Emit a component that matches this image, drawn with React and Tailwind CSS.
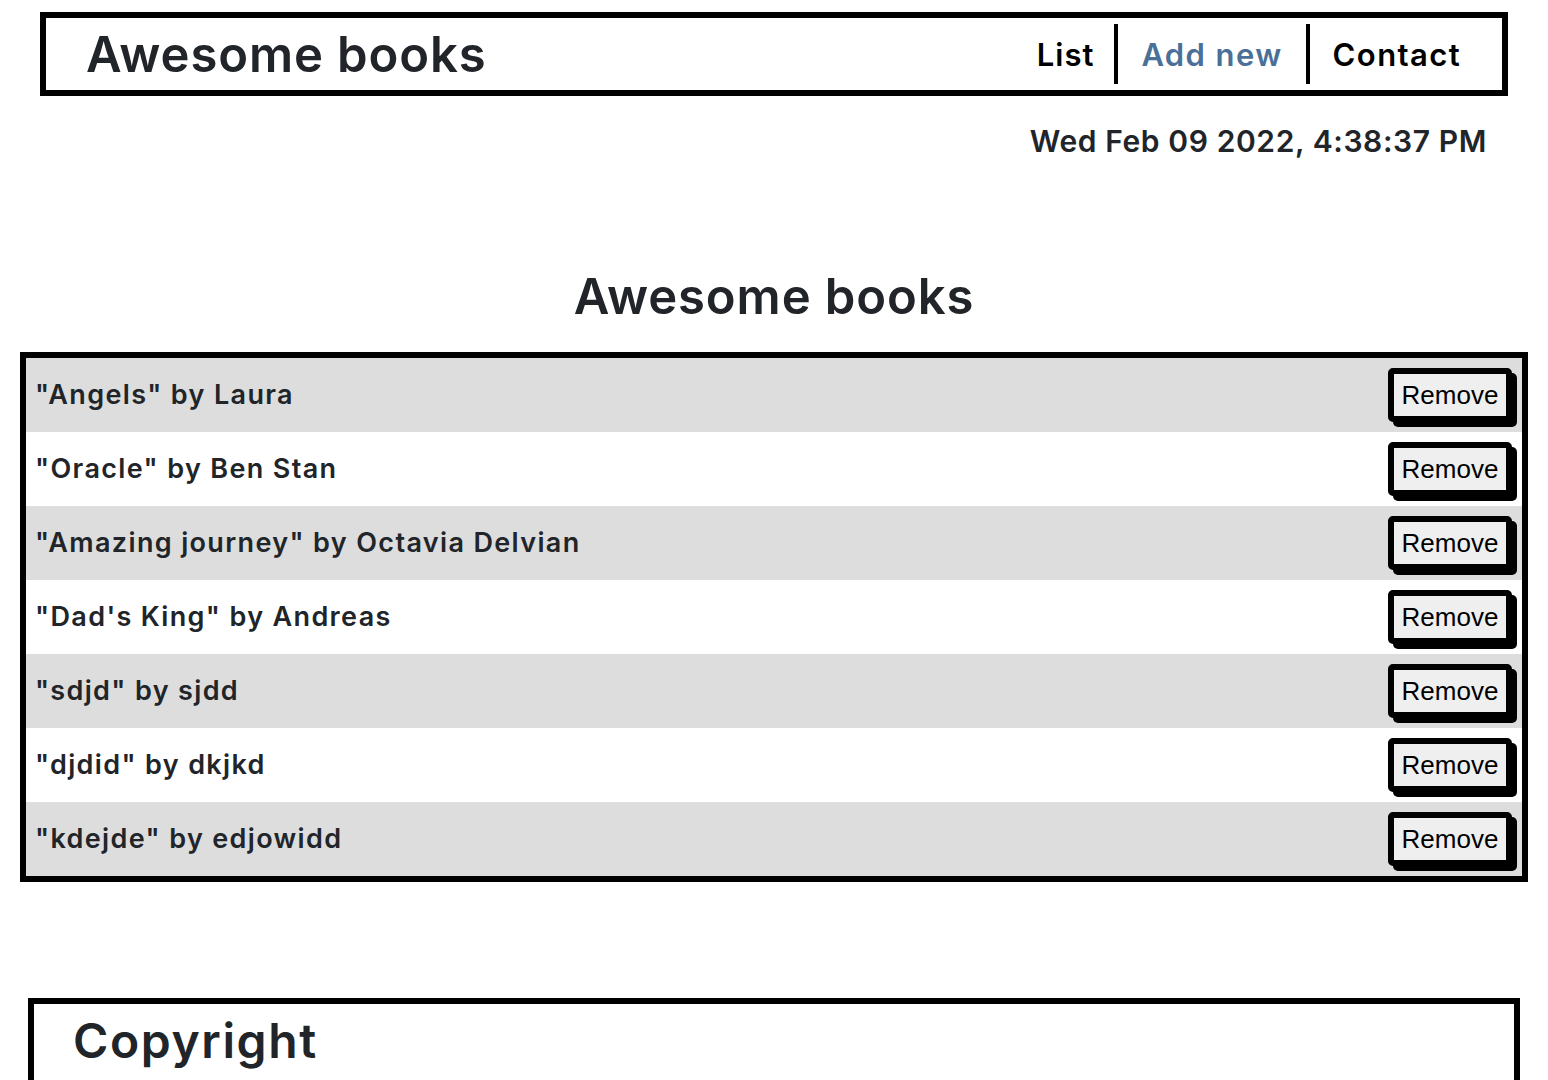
import React from "react";

const books = [
  { title: "Angels", author: "Laura" },
  { title: "Oracle", author: "Ben Stan" },
  { title: "Amazing journey", author: "Octavia Delvian" },
  { title: "Dad's King", author: "Andreas" },
  { title: "sdjd", author: "sjdd" },
  { title: "djdid", author: "dkjkd" },
  { title: "kdejde", author: "edjowidd" },
];

const App = () => {
  return (
    <div className="min-h-screen bg-white font-['Inter',sans-serif] text-[#212529] overflow-hidden">
      {/* NAV */}
      <header className="mx-[40px] mt-[12px] h-[84px] border-[6px] border-black flex items-center justify-between pl-[40px] pr-[41px]">
        <h1 className="text-[49px] leading-none font-semibold tracking-[0.9px]">Awesome books</h1>
        <ul className="flex items-center text-[31px] font-semibold leading-none tracking-[1.4px]">
          <li className="h-[60px] flex items-center pr-[20px] text-black tracking-[1px]">List</li>
          <li className="h-[60px] flex items-center px-[23px] border-l-4 border-black text-[#4b7098]">Add new</li>
          <li className="h-[60px] flex items-center pl-[23px] border-l-4 border-black text-black">Contact</li>
        </ul>
      </header>

      {/* DATE */}
      <p className="mt-[27px] mr-[61px] text-right text-[30px] leading-[36px] font-semibold tracking-[0.6px]">
        Wed Feb 09 2022, 4:38:37 PM
      </p>

      {/* LIST */}
      <h2 className="mt-[110px] text-center text-[49px] leading-[56px] font-semibold tracking-[0.9px]">
        Awesome books
      </h2>

      <ul className="mt-[27px] mx-[20px] border-[6px] border-black">
        {books.map((b, i) => (
          <li
            key={b.title}
            className={`h-[74px] flex items-center justify-between pl-[9px] pr-[10px] ${
              i % 2 === 0 ? "bg-[#dddddd]" : "bg-white"
            }`}
          >
            <span className="text-[27px] font-semibold tracking-[1.35px]">
              "{b.title}" by {b.author}
            </span>
            <button className="w-[124px] h-[54px] border-[6px] border-black rounded-[5px] bg-[#efefef] shadow-[5px_5px_0_#000] font-['Liberation_Sans',Arial,sans-serif] text-[26px] leading-none text-black">
              Remove
            </button>
          </li>
        ))}
      </ul>

      {/* FOOTER */}
      <footer className="mt-[116px] mx-[28px] h-[120px] border-[6px] border-black pl-[39px] pt-[9px]">
        <p className="text-[48px] leading-[56px] font-semibold tracking-[1.6px]">Copyright</p>
      </footer>
    </div>
  );
};

export default App;
